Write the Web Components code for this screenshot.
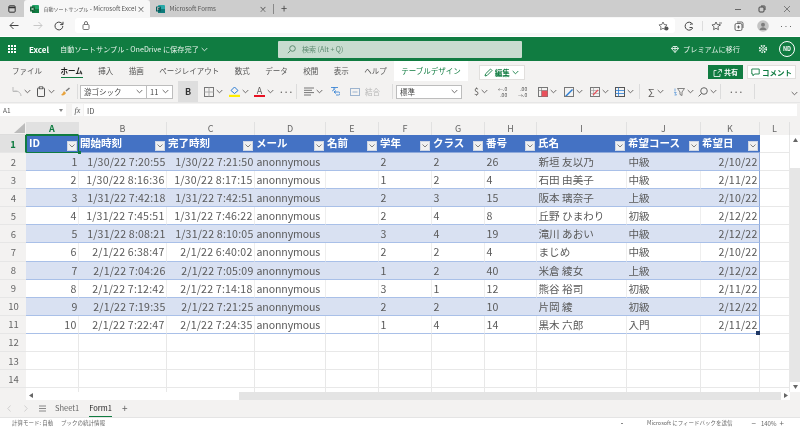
<!DOCTYPE html>
<html lang="ja">
<head>
<meta charset="utf-8">
<title>自動ソートサンプル - Microsoft Excel</title>
<style>
	html, body { margin: 0; height: 429px; overflow: hidden; background: #fff; }
	body {
		display: flex;
		flex-direction: column;
		width: 800px;
		font-family: "Noto Sans CJK JP", "Noto Sans", sans-serif;
		color: #444;
		filter: blur(.35px);
	}
	body > * { flex: none; }
</style>
</head>
<body>
<browser-chrome></browser-chrome>
<excel-header></excel-header>
<excel-ribbon></excel-ribbon>
<formula-bar></formula-bar>
<sheet-grid></sheet-grid>
<sheet-tabs></sheet-tabs>
<status-bar></status-bar>

<script>
const caret = (c = "#605e5c") => `<svg width="7" height="5" viewBox="0 0 7 5"><path d="M.7 1l2.800 2.800L6.300 1" fill="none" stroke="${c}" stroke-width=".9"/></svg>`;
const svg = (w, h, body) => `<svg width="${w}" height="${h}" viewBox="0 0 ${w} ${h}" fill="none" stroke="#605e5c" stroke-width="1">${body}</svg>`;

class BrowserTab extends HTMLElement {
	constructor() {
		super();
		this.attachShadow({ mode: "open" });
		this.shadowRoot.innerHTML = `
			<style>
				:host { display: flex; align-items: center; box-sizing: border-box; height: 17px; font-size: 6.200px; color: #555; white-space: nowrap; }
				:host([active]) { background: #f7f7f7; border-radius: 3px 3px 0 0; }
				.t { flex: 1; margin-left: 5px; }
				.x { font-size: 8px; color: #444; margin-right: 5px; line-height: 1; }
				::slotted(svg) { flex: none; margin-left: 5.500px; }
				::slotted(small) { font-size: 5px; }
			</style>
			<slot name="icon"></slot><span class="t"><slot></slot></span><span class="x">×</span>`;
	}
}
customElements.define("browser-tab", BrowserTab);

class BrowserChrome extends HTMLElement {
	constructor() {
		super();
		this.attachShadow({ mode: "open" });
		this.shadowRoot.innerHTML = `
			<style>
				:host { display: block; height: 37px; }
				.tabs { display: flex; align-items: center; height: 17px; background: #cdcdcd; }
				.win { width: 24px; display: flex; justify-content: center; }
				browser-tab.a { width: 126px; }
				browser-tab.b { width: 122px; }
				.div { width: 1px; height: 10px; background: #888; margin-left: 1px; }
				.plus { width: 20px; text-align: center; font-size: 11px; line-height: 1; color: #444; }
				.wc { margin-left: auto; display: flex; align-items: center; padding-right: 1px; }
				.wc span { width: 24.500px; display: flex; justify-content: center; }
				.nav { display: flex; align-items: center; height: 20px; background: #f7f7f7; box-sizing: border-box; padding-bottom: 2px; border-bottom: 1px solid #fff; }
				.nav > span { display: flex; justify-content: center; }
				.addr { width: 600px; height: 15px; margin-left: 5px; background: #fff; border-radius: 3px; display: flex; align-items: center; justify-content: space-between; padding: 0 6px 0 7px; box-sizing: border-box; }
				.right { display: flex; align-items: center; }
				.right span { display: flex; justify-content: center; width: 12px; flex: none; }
				.right .sp { width: 1px; height: 10px; background: #ddd; margin: 0 6px 0 7px; }
			</style>
			<div class="tabs">
				<span class="win">${svg(8, 8, '<rect x=".8" y=".8" width="6.400" height="6.400" rx="1" stroke="#333"/><path d="M1 2.500h6" stroke="#333" stroke-width="1.500"/>')}</span>
				<browser-tab class="a" active>
					<svg slot="icon" width="9" height="8" viewBox="0 0 9 8"><rect x="2" width="7" height="8" rx="1" fill="#21a366"/><rect x="2" y="4" width="7" height="4" fill="#107c41"/><rect y="1.500" width="5" height="5" rx=".6" fill="#0b5c30"/><path d="M1.200 2.700l2.600 2.600M3.800 2.700L1.200 5.300" stroke="#fff" stroke-width=".7"/></svg>
					<small>自動ソートサンプル</small> - Microsoft Excel
				</browser-tab>
				<browser-tab class="b">
					<svg slot="icon" width="9" height="8" viewBox="0 0 9 8"><rect x="2" width="7" height="8" rx="1" fill="#28a8a8"/><rect x="2" y="4" width="7" height="4" fill="#0e7a7a"/><rect y="1.500" width="5" height="5" rx=".6" fill="#075f5f"/><path d="M1.500 5.500v-3h2M1.500 4h1.600" stroke="#fff" stroke-width=".6"/></svg>
					Microsoft Forms
				</browser-tab>
				<span class="div"></span>
				<span class="plus">+</span>
				<span class="wc">
					<span>${svg(8, 8, '<path d="M1 4.500h6" stroke="#666"/>')}</span>
					<span>${svg(8, 8, '<rect x="1" y="2" width="5" height="5" rx="1" stroke="#444"/><path d="M3 1h3.500A.5.500 0 0 1 7 1.500V5" stroke="#444"/>')}</span>
					<span>${svg(8, 8, '<path d="M1 1l6 6M7 1L1 7" stroke="#666" stroke-width=".8"/>')}</span>
				</span>
			</div>
			<div class="nav">
				<span style="width:28px">${svg(10, 9, '<path d="M9.500 4.500H1M4.500 1L1 4.500 4.500 8" stroke="#444"/>')}</span>
				<span style="width:20px">${svg(10, 9, '<path d="M.5 4.500H9M5.500 1L9 4.500 5.500 8" stroke="#c8c8c8"/>')}</span>
				<span style="width:22px">${svg(10, 10, '<path d="M8.800 5A3.900 3.900 0 1 1 7.600 2.200L9 3.500M9 .8v2.800H6.200" stroke="#444"/>')}</span>
				<div class="addr">
					${svg(8, 9, '<rect x="1" y="3.500" width="6" height="5" rx=".8" stroke="#777"/><path d="M2.500 3.500V2a1.500 1.500 0 0 1 3 0v1.500" stroke="#777"/>')}
					${svg(11, 10, '<path d="M5 1l1.200 2.500 2.800.4-2 2 .4 2.800L5 7.300 2.600 8.700 3 5.900l-2-2 2.800-.4z" stroke="#555" stroke-width=".8"/><circle cx="8.500" cy="7.500" r="2" fill="#555" stroke="none"/>')}
				</div>
				<div class="right">
					<span style="margin-left:8px">${svg(10, 10, '<path d="M8.500 3A4 4 0 1 0 8.700 7M6 3.500a1.800 1.800 0 0 1 2.500 0M5.500 6.500h3" stroke="#444"/>')}</span>
					<span class="sp"></span>
					<span style="margin-left:1px">${svg(11, 10, '<path d="M5 1l1.200 2.500 2.800.4-2 2 .4 2.800L5 7.300 2.600 8.700 3 5.900l-2-2 2.800-.4z" stroke="#444" stroke-width=".8"/><path d="M8 2h3M8 4h2" stroke="#444" stroke-width=".7"/>')}</span>
					<span style="margin-left:11px">${svg(10, 10, '<rect x="1" y="2.500" width="7" height="7" rx="1.500" stroke="#444" stroke-width=".8"/><path d="M3 1h4.500A1.500 1.500 0 0 1 9 2.500V7M4.500 4.500v3M3 6h3" stroke="#444" stroke-width=".8"/>')}</span>
					<span style="margin-left:12px">${svg(12, 12, '<circle cx="6" cy="6" r="5.800" fill="#c4c4c4" stroke="none"/><circle cx="6" cy="4.700" r="2" fill="#7d7d7d" stroke="none"/><path d="M2.500 10c.5-2 2-2.800 3.500-2.800S9 8 9.500 10z" fill="#7d7d7d" stroke="none"/>')}</span>
					<span style="margin-left:11px;font-size:8px;line-height:1;color:#444">···</span>
				</div>
			</div>`;
	}
}
customElements.define("browser-chrome", BrowserChrome);

class ExcelHeader extends HTMLElement {
	constructor() {
		super();
		this.attachShadow({ mode: "open" });
		let dots = "";
		for (let y = 0; y < 3; y++) for (let x = 0; x < 3; x++) dots += `<rect x="${x * 3}" y="${y * 3}" width="2" height="2"/>`;
		this.shadowRoot.innerHTML = `
			<style>
				:host { display: flex; align-items: center; height: 24px; background: #107c41; color: #fff; font-size: 7.200px; white-space: nowrap; }
				.dots { margin-left: 8px; display: flex; }
				.name { margin-left: 13px; font-weight: 700; font-size: 8px; width: 31px; }
				.title { width: 218px; display: flex; align-items: center; gap: 2px; color: #e6f2ea; }
				.search { width: 244px; height: 17px; background: #c8dccf; display: flex; align-items: center; border-radius: 1px; color: #5d8a70; font-size: 7px; }
				.search svg { margin: 0 6px 0 9px; }
				.prem { margin-left: 149px; display: flex; align-items: center; gap: 4px; width: 87px; color: #e6f2ea; }
				.gear { width: 10px; display: flex; justify-content: center; }
				.nd { margin-left: 11px; width: 16px; height: 16px; border: 1px solid #fff; border-radius: 50%; display: flex; align-items: center; justify-content: center; font-size: 5.500px; font-weight: 700; box-sizing: border-box; }
			</style>
			<span class="dots"><svg width="8" height="8" viewBox="0 0 8 8" fill="#fff">${dots}</svg></span>
			<span class="name">Excel</span>
			<span class="title">自動ソートサンプル - OneDrive に保存完了 ${caret("#e6f2ea")}</span>
			<div class="search">
				<svg width="9" height="9" viewBox="0 0 9 9" fill="none" stroke="#5d8a70"><circle cx="5.500" cy="3.500" r="2.800"/><path d="M3.500 5.500L.8 8.200"/></svg>
				検索 (Alt + Q)
			</div>
			<div class="prem">
				<svg width="8" height="7" viewBox="0 0 8 7" fill="none" stroke="#fff" stroke-width=".8"><path d="M2 .5h4L7.500 2.500 4 6.500.5 2.500zM.5 2.500h7M4 .5v6"/></svg>
				プレミアムに移行
			</div>
			<span class="gear"><svg width="10" height="10" viewBox="0 0 10 10" fill="none" stroke="#fff"><circle cx="5" cy="5" r="1.400" stroke-width=".8"/><circle cx="5" cy="5" r="3.300" stroke-width="1.600" stroke-dasharray="1.500 1.100"/></svg></span>
			<span class="nd">ND</span>`;
	}
}
customElements.define("excel-header", ExcelHeader);

class RibbonTab extends HTMLElement {
	constructor() {
		super();
		this.attachShadow({ mode: "open" });
		this.shadowRoot.innerHTML = `
			<style>
				:host { display: block; position: relative; font-size: 7.500px; line-height: 20px; height: 20px; color: #555; margin-right: 15.500px; white-space: nowrap; }
				:host([active]) { font-weight: 700; color: #222; }
				:host([active])::after { content: ""; position: absolute; left: 0; right: 0; bottom: 3px; height: 1.500px; background: #107c41; }
				:host([design]) { color: #107c41; background: #fff; padding: 0 7px; margin: 0 11px 0 -8px; }
			</style>
			<slot></slot>`;
	}
}
customElements.define("ribbon-tab", RibbonTab);

class ToolBtn extends HTMLElement {
	constructor() {
		super();
		this.attachShadow({ mode: "open" });
		this.shadowRoot.innerHTML = `
			<style>
				:host { display: flex; align-items: center; height: 20px; gap: 2px; font-size: 8px; color: #605e5c; flex: none; }
			</style>
			<slot></slot>${this.hasAttribute("caret") ? caret() : ""}`;
	}
}
customElements.define("tool-btn", ToolBtn);

class SelectBox extends HTMLElement {
	constructor() {
		super();
		this.attachShadow({ mode: "open" });
		this.shadowRoot.innerHTML = `
			<style>
				:host { display: flex; align-items: center; justify-content: space-between; box-sizing: border-box; height: 14px; background: #fff; border: 1px solid #bdbdbd; padding: 0 3px; font-size: 7.500px; color: #444; flex: none; }
			</style>
			<span><slot></slot></span>${caret()}`;
	}
}
customElements.define("select-box", SelectBox);

class ExcelRibbon extends HTMLElement {
	constructor() {
		super();
		this.attachShadow({ mode: "open" });
		const sep = '<i class="sep"></i>';
		this.shadowRoot.innerHTML = `
			<style>
				:host { display: block; background: #f3f2f1; height: 43px; }
				.tabs { display: flex; align-items: center; padding-left: 12px; height: 20px; }
				.edit { display: flex; align-items: center; gap: 2px; height: 13px; padding: 0 5px 0 4px; background: #fff; border: 1px solid #e1dfdd; font-size: 7.500px; color: #107c41; font-weight: 700; margin-top: 2px; }
				.share { margin-left: auto; display: flex; align-items: center; gap: 2px; height: 14px; margin-top: 2px; width: 35px; justify-content: center; background: #107c41; color: #fff; font-size: 7px; font-weight: 700; }
				.comment { display: flex; align-items: center; gap: 2px; height: 14px; margin: 2px 4px 0 4px; width: 49px; justify-content: center; background: #fff; color: #107c41; font-size: 7.500px; font-weight: 700; border: 1px solid #e1dfdd; box-sizing: border-box; }
				.tools { display: flex; align-items: center; height: 21px; padding-left: 10px; position: relative; border-bottom: 1px solid #e6e6e6; }
				.sep { width: 1px; height: 15px; background: #dcdcdc; flex: none; }
				.b { width: 20px; height: 21px; background: #dedede; display: flex; align-items: center; justify-content: center; font-weight: 700; font-size: 9px; color: #333; flex: none; }
				.muted { color: #b5b5b5; font-size: 7.500px; }
				.more { position: absolute; right: 2px; bottom: 1px; }
				.dim { font-size: 5px; line-height: 5.500px; color: #555; text-align: right; }
			</style>
			<div class="tabs">
				<ribbon-tab style="margin-right:18.500px">ファイル</ribbon-tab>
				<ribbon-tab active>ホーム</ribbon-tab>
				<ribbon-tab>挿入</ribbon-tab>
				<ribbon-tab>描画</ribbon-tab>
				<ribbon-tab>ページレイアウト</ribbon-tab>
				<ribbon-tab>数式</ribbon-tab>
				<ribbon-tab>データ</ribbon-tab>
				<ribbon-tab>校閲</ribbon-tab>
				<ribbon-tab>表示</ribbon-tab>
				<ribbon-tab>ヘルプ</ribbon-tab>
				<ribbon-tab design>テーブルデザイン</ribbon-tab>
				<div class="edit">
					<svg width="9" height="9" viewBox="0 0 9 9" fill="none" stroke="#107c41" stroke-width=".9"><path d="M1 8l.6-2.200L6.500 1 8 2.500 3.200 7.400z"/></svg>
					編集 ${caret("#107c41")}
				</div>
				<div class="share">
					<svg width="9" height="9" viewBox="0 0 9 9" fill="none" stroke="#fff" stroke-width=".8"><path d="M5.500 1.500h3v3M8.300 1.700L4.500 5M3.500 2.500H1v6h6V6"/></svg>
					共有
				</div>
				<div class="comment">
					<svg width="9" height="9" viewBox="0 0 9 9" fill="none" stroke="#107c41" stroke-width=".9"><path d="M.8 1h7.400v5H3.500L2 7.800V6H.8z"/></svg>
					コメント
				</div>
			</div>
			<div class="tools">
				<tool-btn caret style="width:26px">${svg(12, 11, '<path d="M3 1v4.500h4.500M3 5.500a5.500 5 0 0 1 8 4.500" stroke="#bbb"/>')}</tool-btn>
				<tool-btn caret style="width:24px;margin-left:0">${svg(10, 11, '<rect x="1.500" y="2" width="7" height="8.500" rx=".6" stroke="#555"/><rect x="3.300" y=".8" width="3.400" height="2" fill="#f3f2f1" stroke="#555" stroke-width=".8"/>')}</tool-btn>
				<tool-btn style="width:17px">${svg(11, 10, '<path d="M1 8c2 1 4 0 5-2L4 4C3 6 2 7 1 8z" fill="#e8a33d" stroke="none"/><path d="M6 4l3.500-3" stroke="#7a7a7a" stroke-width="1.500"/>')}</tool-btn>
				${sep}
				<select-box style="width:67px;margin-left:2px">游ゴシック</select-box>
				<select-box style="width:27px;margin-left:-1px">11</select-box>
				<div class="b" style="margin-left:5px">B</div>
				<tool-btn caret style="width:25px;margin-left:6px">${svg(10, 10, '<rect x=".5" y=".5" width="9" height="9" stroke="#777"/><path d="M5 .5v9M.5 5h9" stroke="#aaa"/>')}</tool-btn>
				<tool-btn caret style="width:25px">${svg(11, 11, '<path d="M5.500 1L9 4.500 5.500 7.500 2 4.500z" stroke="#2b7cd3"/><rect y="8.800" width="11" height="2.200" fill="#ffee00" stroke="none"/>')}</tool-btn>
				<tool-btn caret style="width:25px;font-weight:700"><span style="display:inline-block;width:11px;text-align:center;line-height:9px;border-bottom:2px solid #e81123;font-size:9px;font-weight:400">A</span></tool-btn>
				<tool-btn style="width:17px;font-weight:700;letter-spacing:0">···</tool-btn>
				${sep}
				<tool-btn caret style="width:26px;margin-left:7px">${svg(10, 9, '<path d="M0 1h10M0 3.300h8M0 5.600h10M0 8h7" stroke="#777"/>')}</tool-btn>
				<tool-btn style="width:20px">${svg(10, 11, '<path d="M1 1.500h7M4 1v3M2 5c1-.5 2-1 3-2.500M6 9h2.500a1.500 1.500 0 0 0 0-3H4M6 4.500L4 6l2 1.500" stroke="#2b7cd3" stroke-width=".8"/>')}</tool-btn>
				<tool-btn style="width:42px;gap:5px">${svg(10, 10, '<rect x=".5" y="1.500" width="9" height="7" stroke="#9db4cf"/><path d="M2.500 5h5" stroke="#9db4cf"/>')}<span class="muted">結合</span></tool-btn>
				${sep}
				<select-box style="width:66px;margin-left:3px">標準</select-box>
				<tool-btn caret style="width:24px;margin-left:12px;font-size:9px">$</tool-btn>
				<tool-btn style="width:20px"><span class="dim">←.0<br>.00</span></tool-btn>
				<tool-btn style="width:20px"><span class="dim">.00<br>→.0</span></tool-btn>
				<tool-btn caret style="width:26px">${svg(10, 10, '<rect x=".5" y=".5" width="9" height="9" stroke="#777"/><rect x="3.500" y="3.500" width="6" height="6" fill="#e8505b" stroke="none"/><path d="M.5 3.500h9M3.500 .5v9" stroke="#777" stroke-width=".6"/>')}</tool-btn>
				<tool-btn caret style="width:26px">${svg(10, 10, '<rect x=".5" y=".5" width="9" height="9" stroke="#777"/><path d="M1 9l7-7 1 1-6 6z" fill="#2b7cd3" stroke="none"/>')}</tool-btn>
				<tool-btn caret style="width:25px">${svg(10, 10, '<rect x=".5" y=".5" width="9" height="9" stroke="#777"/><path d="M.5 3.500h9M.5 6.500h9M3.500 .5v9" stroke="#999" stroke-width=".6"/><path d="M3 8l5-5" stroke="#e8505b" stroke-width="1.300"/>')}</tool-btn>
				<tool-btn caret style="width:24px">${svg(10, 10, '<rect x=".5" y=".5" width="9" height="9" stroke="#555"/><path d="M.5 3.500h9M.5 6.500h9M3.500 .5v9" stroke="#2b7cd3" stroke-width=".8"/>')}</tool-btn>
				${sep}
				<tool-btn caret style="width:26px;margin-left:8px;font-size:11px">Σ</tool-btn>
				<tool-btn caret style="width:24px">${svg(11, 10, '<path d="M1 4.500V1.500M.5 8h2L.5 5.500h2" stroke="#2b7cd3" stroke-width=".6"/><path d="M3.500 1.500h7L8 5v3.500L6 7.500V5z" stroke="#666" stroke-width=".8"/>')}</tool-btn>
				<tool-btn caret style="width:22px">${svg(10, 10, '<circle cx="6" cy="4" r="3.300" stroke="#666"/><path d="M3.600 6.400L.6 9.400" stroke="#666"/>')}</tool-btn>
				${sep}
				<tool-btn style="width:25px;padding-left:8px;font-weight:700">···</tool-btn>
				${sep}
				<span class="more">${caret()}</span>
			</div>`;
	}
}
customElements.define("excel-ribbon", ExcelRibbon);

class FormulaBar extends HTMLElement {
	constructor() {
		super();
		this.attachShadow({ mode: "open" });
		this.shadowRoot.innerHTML = `
			<style>
				:host { display: flex; align-items: flex-start; height: 18px; box-sizing: border-box; background: #f3f2f1; font-size: 6.500px; color: #555; }
				.name { width: 66px; height: 12px; background: #fff; display: flex; align-items: center; justify-content: space-between; padding: 0 3px; box-sizing: border-box; }
				.fx { width: 11px; height: 12px; margin-left: 6px; background: #fafafa; font-family: "Liberation Serif", serif; font-style: italic; font-size: 8px; display: flex; align-items: center; justify-content: center; }
				.val { width: 713px; height: 12px; margin-left: 1px; background: #fff; display: flex; align-items: center; padding-left: 3px; box-sizing: border-box; font-size: 7.500px; }
			</style>
			<div class="name"><span>A1</span><svg width="4" height="3" viewBox="0 0 4 3"><path d="M0 0h4L2 3z" fill="#888"/></svg></div>
			<div class="fx">fx</div>
			<div class="val">ID</div>`;
	}
}
customElements.define("formula-bar", FormulaBar);

const sheetHeads = ["ID", "開始時刻", "完了時刻", "メール", "名前", "学年", "クラス", "番号", "氏名", "希望コース", "希望日"];
const sheetRows = [
	["1", "1/30/22 7:20:55", "1/30/22 7:21:50", "anonnymous", "", "2", "2", "26", "新垣 友以乃", "中級", "2/10/22"],
	["2", "1/30/22 8:16:36", "1/30/22 8:17:15", "anonnymous", "", "1", "2", "4", "石田 由美子", "中級", "2/11/22"],
	["3", "1/31/22 7:42:18", "1/31/22 7:42:51", "anonnymous", "", "2", "3", "15", "阪本 璃奈子", "上級", "2/10/22"],
	["4", "1/31/22 7:45:51", "1/31/22 7:46:22", "anonnymous", "", "2", "4", "8", "丘野 ひまわり", "初級", "2/12/22"],
	["5", "1/31/22 8:08:21", "1/31/22 8:10:05", "anonnymous", "", "3", "4", "19", "滝川 あおい", "中級", "2/12/22"],
	["6", "2/1/22 6:38:47", "2/1/22 6:40:02", "anonnymous", "", "2", "2", "4", "まじめ", "中級", "2/10/22"],
	["7", "2/1/22 7:04:26", "2/1/22 7:05:09", "anonnymous", "", "1", "2", "40", "米倉 綾女", "上級", "2/12/22"],
	["8", "2/1/22 7:12:42", "2/1/22 7:14:18", "anonnymous", "", "3", "1", "12", "熊谷 裕司", "初級", "2/11/22"],
	["9", "2/1/22 7:19:35", "2/1/22 7:21:25", "anonnymous", "", "2", "2", "10", "片岡 綾", "初級", "2/12/22"],
	["10", "2/1/22 7:22:47", "2/1/22 7:24:35", "anonnymous", "", "1", "4", "14", "黒木 六郎", "入門", "2/11/22"],
];
const rightCols = [0, 1, 2, 10];

class SheetGrid extends HTMLElement {
	constructor() {
		super();
		this.attachShadow({ mode: "open" });
		let h = `<div class="corner"><svg width="11" height="10" viewBox="0 0 11 10"><path d="M11 0v10H0z" fill="#bcbcbc"/></svg></div>`;
		"ABCDEFGHIJKL".split("").forEach((c, i) => {
			h += `<div class="colh${i == 0 ? " on" : ""}">${c}</div>`;
		});
		h += `<div class="rowh on">1</div>`;
		sheetHeads.forEach((t, i) => {
			h += `<div class="head${i == 0 ? " sel" : ""}"><span>${t}</span><b class="flt"><svg width="6" height="4" viewBox="0 0 6 4"><path d="M.5.500L3 3 5.500.500" fill="none" stroke="#666" stroke-width=".8"/></svg></b></div>`;
		});
		h += `<div class="c"></div>`;
		sheetRows.forEach((row, r) => {
			h += `<div class="rowh">${r + 2}</div>`;
			row.forEach((v, i) => {
				let cls = "t" + (r % 2 == 0 ? " band" : "");
				if (rightCols.includes(i)) cls += " r";
				if (i == 3) cls += " an";
				if (i == 10) cls += " end";
				h += `<div class="${cls}">${v}</div>`;
			});
			h += `<div class="c"></div>`;
		});
		for (let r = 12; r <= 14; r++) {
			h += `<div class="rowh">${r}</div>`;
			for (let i = 0; i < 12; i++) h += `<div class="c"></div>`;
		}
		h += `<div class="rowh last"></div>`;
		for (let i = 0; i < 12; i++) h += `<div class="c last"></div>`;
		this.shadowRoot.innerHTML = `
			<style>
				:host { display: flex; flex-direction: column; height: 278px; background: #fff; }
				.main { display: flex; height: 269.700px; }
				.grid {
					position: relative;
					width: 790px;
					display: grid;
					grid-template-columns: 26px 53px 88px 88px 71px 53px 53px 53px 52px 90px 74px 59px 30px;
					grid-template-rows: 13.300px 17.700px repeat(13, 18.100px) 3.400px;
					font-size: 10.600px;
					color: #5a5a5a;
					overflow: hidden;
				}
				.grid > div { box-sizing: border-box; white-space: nowrap; }
				.corner { background: #f3f2f1; display: flex; align-items: flex-end; justify-content: flex-end; padding: 0 1px 1px 0; border-bottom: 1px solid #ddd; }
				.colh { background: #f3f2f1; font-size: 9px; line-height: 13px; text-align: center; color: #666; border-right: 1px solid #e1e1e1; }
				.colh.on { background: #e1e1e1; color: #107c41; font-weight: 700; border-bottom: 1px solid #107c41; }
				.rowh { background: #f3f2f1; font-size: 9.500px; display: flex; align-items: center; justify-content: center; color: #666; border-bottom: 1px solid #e6e6e6; padding-left: 1px; }
				.rowh.on { background: #e1e1e1; color: #107c41; font-weight: 700; border-right: 1px solid #107c41; }
				.rowh.last { border: 0; }
				.head { position: relative; background: #4472c4; color: #fff; font-weight: 700; font-size: 10.500px; line-height: 15px; padding-left: 1px; border-bottom: 1px solid #8ea9db; }
				.head.sel { outline: 1.500px solid #107c41; outline-offset: -1.500px; padding-left: 3px; z-index: 2; }
				.head.sel::after { content: ""; position: absolute; right: -2px; bottom: -2px; width: 3px; height: 3px; background: #107c41; }
				.flt { position: absolute; right: 2px; bottom: 1px; width: 8px; height: 8px; background: #f0f0f0; border: 1px solid #cfd6e4; display: flex; align-items: center; justify-content: center; }
				.t { padding: 0 1.500px 0 1.500px; line-height: 17px; border-bottom: 1px solid #a9c0e8; border-right: 1px solid #eee; }
				.t.band { background: #d9e1f2; border-right: 0; }
				.t.r { text-align: right; letter-spacing: .2px; }
				.t.an { letter-spacing: -.12px; }
				.t.end { border-right: 1px solid #8ea9db; }
				.c { border-right: 1px solid #e8e8e8; border-bottom: 1px solid #e8e8e8; }
				.c.last { border-bottom: 0; }
				.handle { position: absolute; left: 756px; top: 208.500px; width: 4px; height: 4px; background: #1f3864; }
				.vbar { width: 10px; background: #e6e6e6; display: flex; flex-direction: column; align-items: center; }
				.vbar .top { width: 10px; height: 13.300px; background: #f3f2f1; flex: none; }
				.vbar .thumb { width: 10px; height: 23px; background: #fff; flex: none; }
				.ar { width: 10px; height: 10px; background: #fff; display: flex; align-items: center; justify-content: center; flex: none; }
				.hbar { height: 8.300px; background: #f3f2f1; padding: 0 10px 0 26px; }
				.track { height: 8.300px; background: #e4e4e4; display: flex; }
				.track .thumb { width: 204px; background: #fff; }
				.track .ar { height: 8.300px; width: 9px; }
				.fill { flex: 1; }
			</style>
			<div class="main">
				<div class="grid">${h}<i class="handle"></i></div>
				<div class="vbar">
					<span class="top"></span>
					<span class="ar"><svg width="5" height="4" viewBox="0 0 5 4"><path d="M2.500 0L5 4H0z" fill="#666"/></svg></span>
					<span class="thumb"></span>
					<span class="fill"></span>
					<span class="ar"><svg width="5" height="4" viewBox="0 0 5 4"><path d="M2.500 4L5 0H0z" fill="#666"/></svg></span>
				</div>
			</div>
			<div class="hbar">
				<div class="track">
					<span class="ar"><svg width="4" height="5" viewBox="0 0 4 5"><path d="M0 2.500L4 0v5z" fill="#666"/></svg></span>
					<span class="thumb"></span>
					<span class="fill"></span>
					<span class="ar"><svg width="4" height="5" viewBox="0 0 4 5"><path d="M4 2.500L0 0v5z" fill="#666"/></svg></span>
				</div>
			</div>`;
	}
}
customElements.define("sheet-grid", SheetGrid);

class SheetTabs extends HTMLElement {
	constructor() {
		super();
		this.attachShadow({ mode: "open" });
		this.shadowRoot.innerHTML = `
			<style>
				:host { display: flex; align-items: center; height: 17.500px; background: #f3f2f1; font-size: 7.500px; color: #666; border-bottom: 1px solid #e4e4e4; box-sizing: border-box; }
				.tab { position: relative; line-height: 16.500px; height: 16.500px; }
				.tab.on { color: #222; margin-left: 10px; }
				.tab.on::after { content: ""; position: absolute; left: 0; right: 0; bottom: 0; height: 1px; background: #107c41; }
				span { display: flex; justify-content: center; }
			</style>
			<span style="width:17px;margin-left:0">${svg(4, 7, '<path d="M3.500 .5L.8 3.500l2.700 3" stroke="#c8c8c8" stroke-width=".8"/>')}</span>
			<span style="width:17px">${svg(4, 7, '<path d="M.5 .5l2.700 3-2.700 3" stroke="#c8c8c8" stroke-width=".8"/>')}</span>
			<span style="width:17px">${svg(7, 7, '<path d="M0 1h7M0 3.500h7M0 6h7" stroke="#888"/>')}</span>
			<div class="tab" style="margin-left:4px">Sheet1</div>
			<div class="tab on">Form1</div>
			<span style="width:26px;font-size:10px;color:#666;line-height:1">+</span>`;
	}
}
customElements.define("sheet-tabs", SheetTabs);

class StatusBar extends HTMLElement {
	constructor() {
		super();
		this.attachShadow({ mode: "open" });
		this.shadowRoot.innerHTML = `
			<style>
				:host { display: flex; align-items: center; height: 11.500px; background: #fff; font-size: 5.500px; color: #666; white-space: nowrap; padding-left: 12px; overflow: hidden; }
				.r { margin-left: auto; display: flex; align-items: center; }
				.dot { width: 2px; height: 1px; background: #888; margin-right: 24px; }
				.fb { width: 104.500px; }
				.z { display: flex; align-items: center; width: 48.500px; font-size: 6px; }
				.z b { font-weight: 400; font-size: 8px; line-height: 1; }
				.z b:first-child { margin-right: 5px; }
				.z b:last-child { margin-left: 3px; }
			</style>
			<span style="width:49px">計算モード: 自動</span>
			<span>ブックの統計情報</span>
			<div class="r">
				<i class="dot"></i>
				<span class="fb">Microsoft にフィードバックを送信</span>
				<span class="z"><b>−</b>140%<b>+</b></span>
			</div>`;
	}
}
customElements.define("status-bar", StatusBar);
</script>
</body>
</html>
